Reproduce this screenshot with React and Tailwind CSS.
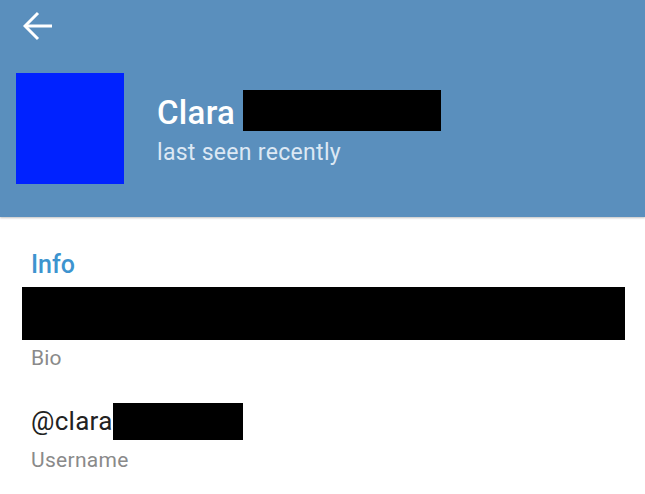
import React from "react";

const BackArrow = () => (
  <svg width="30" height="30" viewBox="0 0 30 30" fill="none">
    <path d="M2 15H29" stroke="white" strokeWidth="3" />
    <path d="M15 2L2 15L15 28" stroke="white" strokeWidth="3" />
  </svg>
);

const App = () => {
  return (
    <div className="w-[645px] h-[494px] bg-white overflow-hidden" style={{ fontFamily: "Roboto, 'Noto Sans', sans-serif" }}>
      {/* Header */}
      <div className="bg-[#5a8fbd] pb-[33px] shadow-[0_1px_2px_rgba(0,0,0,0.25)] relative">
        <div className="h-[52px] flex items-center pl-[23px]">
          <BackArrow />
        </div>
        <div className="mt-[21px] flex items-center pl-[16px]">
          <div className="w-[108px] h-[111px] bg-[#0022ff]" />
          <div className="ml-[33px] flex flex-col">
            <div className="h-[41px] flex items-end">
              <span className="text-[33px] leading-[36px] font-medium text-white tracking-[0.3px]">Clara</span>
              <div className="ml-[8px] w-[198px] h-[41px] bg-black" />
            </div>
            <div className="mt-[7px] text-[23px] leading-[30px] text-[#dce8f4] tracking-[0.3px]">last seen recently</div>
          </div>
        </div>
      </div>

      {/* Info */}
      <div className="pl-[22px] pt-[32px]">
        <div className="pl-[9px] text-[25px] leading-[32px] font-medium text-[#3d94cf]">Info</div>
        <div className="mt-[6px] w-[603px] h-[53px] bg-black" />
        <div className="mt-[4px] pl-[9px] text-[21px] leading-[28px] text-[#8a8a8a] tracking-[0.2px]">Bio</div>

        <div className="mt-[31px] pl-[9px] h-[37px] flex items-center">
          <span className="text-[26px] leading-[37px] text-[#222222] tracking-[0.3px]">@clara</span>
          <div className="w-[130px] h-[37px] bg-black" />
        </div>
        <div className="mt-[6px] pl-[9px] text-[21px] leading-[28px] text-[#8a8a8a] tracking-[0.3px]">Username</div>
      </div>
    </div>
  );
};

export default App;
